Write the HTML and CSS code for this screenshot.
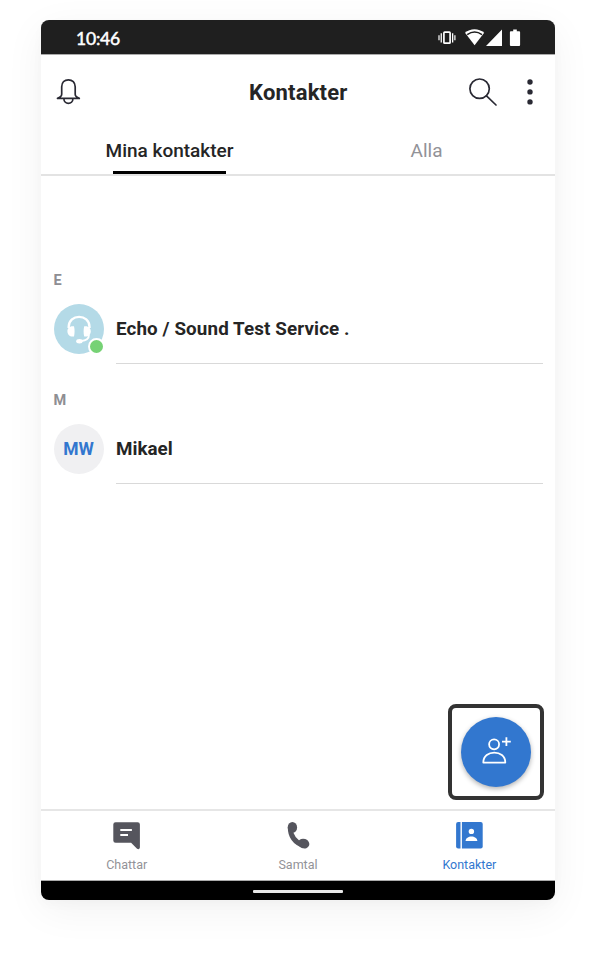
FILE: index.html
```html
<!DOCTYPE html>
<html lang="sv">
<head>
<meta charset="utf-8">
<title>Kontakter</title>
<link rel="stylesheet" href="styles.css">
</head>
<body>
<main class="phone">
  <div class="status">
    <span class="time">10:46</span>
    <svg class="status-icons" width="84" height="20" viewBox="0 0 84 20" fill="#fff">
      <path d="M.4 7.3h1.2v5H.4zM2.6 5.2h1.3v9.2H2.6zM14 5.2h1.3v9.2H14zM16.3 7.3h1.2v5h-1.2z"/>
      <rect x="5.9" y="4.2" width="6.2" height="11" rx=".8" fill="none" stroke="#fff" stroke-width="1.7"/>
      <path d="M27 4.8C32-.1 41-.1 46.2 4.8L36.6 17.2z"/>
      <path d="M29.2 6.7c4.5-3.2 10.3-3.2 14.8 0" fill="none" stroke="#1f1f1f" stroke-width="1.5"/>
      <path d="M64 1.6V18H48zM72.9 3.2h2.3V1.4h3.6v1.8h2.3q1 0 1 1V17q0 1-1 1h-8.2q-1 0-1-1V4.2q0-1 1-1z"/>
    </svg>
  </div>
  <header class="header">
    <svg class="bell" width="25" height="27" viewBox="0 0 25 27" fill="none" stroke="#292933" stroke-width="1.7" stroke-linecap="round" stroke-linejoin="round">
      <path d="M1.5 20.4h21.8c-2.4-.9-4.1-1.8-4.1-4.1V8.7C19.2 4.5 16.3 1.8 12.4 1.8S5.7 4.5 5.7 8.7v7.6c0 2.3-1.7 3.2-4.2 4.1zM7.9 20.7c0 6.2 9 6.2 9 0"/>
    </svg>
    <h1 class="title">Kontakter</h1>
    <svg class="search" width="30" height="30" viewBox="0 0 30 30" fill="none" stroke="#292933" stroke-width="1.7" stroke-linecap="round">
      <circle cx="10.6" cy="11.7" r="9.7"/><path d="M17.5 18.9l9.5 9.1"/>
    </svg>
    <svg class="more" width="6" height="28" viewBox="0 0 6 28" fill="#292933">
      <circle cx="3" cy="4" r="2.7"/><circle cx="3" cy="13.9" r="2.7"/><circle cx="3" cy="23.9" r="2.7"/>
    </svg>
  </header>
  <nav class="tabs">
    <div class="tab tab-active">Mina kontakter</div>
    <div class="tab">Alla</div>
  </nav>
  <section class="list">
    <h2 class="letter">E</h2>
    <div class="contact">
      <div class="avatar avatar-echo">
        <svg width="50" height="50" viewBox="0 0 50 50">
          <path d="M14.7 24v-1.2c0-13.3 20.8-13.3 20.8 0V24" fill="none" stroke="#fff" stroke-width="2.4"/>
          <path d="M20 22.3c.8 3.4.8 6.8 0 10.2-4.1.7-6.6-2-6.600-5.300s2.500-5.600 6.600-4.900zM30.200 22.300c-.8 3.400-.8 6.800 0 10.200 4.100.7 6.600-2 6.600-5.300s-2.500-5.600-6.600-4.900z" fill="#fff"/>
          <path d="M35 30.500c0 4.100-2.600 6.200-7.900 6.500" fill="none" stroke="#fff" stroke-width="1.8"/>
          <ellipse cx="25.4" cy="37.2" rx="3.2" ry="2.2" fill="#fff"/>
        </svg>
        <span class="presence"></span>
      </div>
      <div class="name name-echo">Echo / Sound Test Service .</div>
    </div>
    <h2 class="letter">M</h2>
    <div class="contact">
      <div class="avatar">MW</div>
      <div class="name">Mikael</div>
    </div>
  </section>
  <div class="add-frame">
    <div class="add-button">
      <svg width="32" height="32" viewBox="0 0 32 32" fill="none" stroke="#fff" stroke-width="1.8" stroke-linejoin="round">
        <circle cx="14.1" cy="8.3" r="5"/>
        <path d="M3.3 26.6h22c0-13.4-22-13.4-22 0zM26.4 1.3v8.8M22 5.7h8.8"/>
      </svg>
    </div>
  </div>
  <nav class="bottom">
    <div class="item">
      <svg width="28" height="28" viewBox="0 0 28 28">
        <path d="M2.600.2h22q2.300 0 2.300 2.300v22.600c0 2.200-1.500 2.800-3.100 1.500L18.100 20.700H2.600Q.3 20.700.3 18.400V2.500Q.3.2 2.600.2z" fill="#55555d"/>
        <path d="M7.300 8.100h11.600M7.300 12.900h7.700" stroke="#fff" stroke-width="2"/>
      </svg>
      <span>Chattar</span>
    </div>
    <div class="item">
      <svg width="28" height="28" viewBox="0 0 28 28" fill="#55555d">
        <path d="M6.300 5.500c0 8.500 4.200 14.800 13.500 18.300" fill="none" stroke="#55555d" stroke-width="5"/>
        <ellipse cx="8.400" cy="5.400" rx="4.700" ry="5.400"/>
        <ellipse cx="19.700" cy="21.600" rx="5.700" ry="4.800" transform="rotate(20 19.700 21.600)"/>
      </svg>
      <span>Samtal</span>
    </div>
    <div class="item item-active">
      <svg width="28" height="28" viewBox="0 0 28 28">
        <rect x="1.1" y="0" width="26.600" height="26.600" rx="2" fill="#3277cf"/>
        <path d="M6.200 0v28" stroke="#fff" stroke-width="1.400"/>
        <circle cx="16.400" cy="9.400" r="2.700" fill="#fff"/>
        <path d="M10.600 18.900h11.700c0-6-11.700-6-11.700 0z" fill="#fff"/>
      </svg>
      <span>Kontakter</span>
    </div>
  </nav>
  <div class="system"><span class="handle"></span></div>
</main>
</body>
</html>
```
FILE: styles.css
```css
* { box-sizing: border-box; }
body { margin: 0; height: 960px; padding: 20px 0 0 41px; overflow: hidden; background: #fff; font-family: Roboto, "Liberation Sans", sans-serif; color: #252525; }
.phone {
  width: 514px; height: 880px;
  display: flex; flex-direction: column; overflow: hidden;
  position: relative; background: #fff; border-radius: 8px;
  box-shadow: 0 10px 40px rgba(0, 0, 0, .055), 0 4px 12px rgba(0, 0, 0, .025);
}
.status {
  height: 34px; flex: none; background: #1f1f1f; color: #fff;
  display: flex; justify-content: space-between; align-items: flex-start;
  padding: 8px 33px 0 35px;
  box-shadow: 0 1px 0 #aaa;
}
.time { font: 400 17.5px/21px Lato, sans-serif; -webkit-text-stroke: .5px #fff; letter-spacing: -.2px; }
.header {
  height: 75px; flex: none; padding: 0 22px 0 15px;
  display: grid; grid-template-columns: 70px 1fr 30px 6px; column-gap: 28px; align-items: center;
}
.title { margin: 0; font-size: 22px; letter-spacing: .2px; font-weight: 700; line-height: 28px; padding: 2px 0 0 95px; }
.tabs { height: 47px; flex: none; display: flex; border-bottom: 2px solid #e3e3e3; }
.tab { flex: 1; text-align: center; font-size: 19px; line-height: 44px; color: #929297; position: relative; }
.tab-active { color: #252525; font-weight: 500; }
.tab-active::after {
  content: ""; position: absolute; left: 72px; bottom: 0;
  width: 113px; height: 3px; background: #000;
}
.list { flex: 1; padding: 95px 12px 0 12.5px; }
.letter { margin: 0; height: 32.5px; font-size: 14.5px; line-height: 19px; font-weight: 700; color: #8e8e93; }
.contact { height: 87.5px; display: grid; grid-template-columns: 50px 1fr; column-gap: 12.5px; align-items: start; }
.avatar {
  width: 50px; height: 50px; border-radius: 50%; position: relative;
  background: #f0f0f2; color: #3277cf; font-weight: 700; font-size: 17.5px;
  line-height: 51px; text-align: center;
}
.avatar svg { display: block; }
.avatar-echo { background: #b4dae7; }
.presence {
  position: absolute; right: -1px; bottom: -1px; width: 17px; height: 17px;
  border-radius: 50%; border: 2px solid #fff; background: #76d275;
}
.name { height: 60.5px; line-height: 51px; font-size: 18.8px; font-weight: 700; border-bottom: 1px solid #d9d9d9; }
.name-echo { letter-spacing: .12px; }
.add-frame {
  position: absolute; right: 11px; bottom: 100px; width: 96px; height: 96px;
  border: 4px solid #333; border-radius: 8px; display: flex; align-items: center; justify-content: center;
}
.add-button {
  width: 70px; height: 70px; border-radius: 50%; background: #3277cf;
  display: flex; align-items: center; justify-content: center;
  box-shadow: 0 2px 5px rgba(0, 0, 0, .3);
}
.bottom { height: 72px; flex: none; display: flex; border-top: 2px solid #e6e6e6; border-bottom: 1px solid #aaa; }
.item { flex: 1; display: flex; flex-direction: column; align-items: center; padding-top: 11px; color: #929297; font-size: 12.5px; line-height: 16px; gap: 7px; }
.item svg { display: block; }
.item-active { color: #3277cf; }
.system { height: 19px; flex: none; background: #000; display: flex; justify-content: center; padding-top: 9px; }
.handle { width: 90px; height: 3px; border-radius: 1px; background: #e8e8e8; }
```
